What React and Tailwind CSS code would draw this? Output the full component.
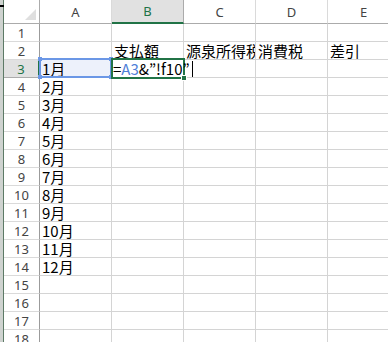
const cols = ['A', 'B', 'C', 'D', 'E']

const cellData = {
  2: { B: '支払額', C: '源泉所得税', D: '消費税', E: '差引' },
  3: { A: '1月' },
}
for (let m = 2; m <= 12; m++) cellData[m + 2] = { A: `${m}月` }

const jp = { fontFamily: '"Noto Sans CJK JP", sans-serif' }
const ui = { fontFamily: '"Noto Sans", sans-serif' }

export default function App() {
  const rows = Array.from({ length: 18 }, (_, i) => i + 1)

  return (
    <div className="relative w-[388px] h-[342px] overflow-hidden bg-white flex">
      {/* left window edge */}
      <div className="relative w-[4px] h-full bg-[#cfd3d0] border-r border-[#5d7a66] shrink-0">
        <div className="absolute left-0 top-[5px] w-[4px] h-[2px] bg-black" />
      </div>

      <div className="grid grid-cols-[36px_72px_72px_72px_72px_72px] grid-rows-[24px] auto-rows-[18px] content-start shrink-0">
        {/* header row */}
        <div className="flex items-end justify-end p-[3px] border-r border-b border-[#ababab] bg-white">
          <svg width="11" height="11" viewBox="0 0 11 11">
            <polygon points="11,0 11,11 0,11" fill="#dfdfdf" />
          </svg>
        </div>
        {cols.map(c => (
          <div
            key={c}
            className={`flex items-center justify-center text-[13px] leading-[16px] border-r ${c === 'B' ? 'bg-[#e1e1e1] text-[#217346] border-b-2 border-b-[#217346] border-r-[#ababab]' : 'bg-white text-[#444] border-b border-[#ababab] border-r-[#dadada]'}`}
            style={ui}
          >
            {c}
          </div>
        ))}

        {rows.map(r => (
          <Row key={r} r={r} />
        ))}
      </div>

      {/* reference range A3 (blue) */}
      <div className="absolute left-[39px] top-[58px] w-[73px] h-[20px] border-2 border-[#6b97e6] pointer-events-none">
        <div className="absolute -left-[3px] -top-[3px] w-[4px] h-[4px] bg-[#6b97e6]" />
        <div className="absolute -right-[3px] -top-[3px] w-[4px] h-[4px] bg-[#6b97e6]" />
        <div className="absolute -left-[3px] -bottom-[3px] w-[4px] h-[4px] bg-[#6b97e6]" />
        <div className="absolute -right-[3px] -bottom-[3px] w-[4px] h-[4px] bg-[#6b97e6]" />
      </div>

      {/* active cell B3 in edit mode */}
      <div className="absolute left-[111px] top-[58px] w-[74px] h-[21px] border-2 border-[#217346] pointer-events-none">
        <div className="absolute -right-[4px] -bottom-[4px] w-[6px] h-[6px] bg-[#217346] border border-white" />
      </div>
      <div
        className="absolute left-[113px] top-[60px] h-[17px] flex items-center whitespace-nowrap text-[15px] leading-[17px] text-black"
        style={jp}
      >
        <span>=</span>
        <span className="text-[#4f7fd8]">A3</span>
        <span>&amp;”!f10”</span>
        <span className="ml-[2px] w-[1px] h-[16px] bg-black" />
      </div>
    </div>
  )
}

function Row({ r }) {
  const data = cellData[r] || {}
  const active = r === 3
  return (
    <>
      <div
        className={`flex items-center justify-center text-[13px] leading-[16px] border-b ${active ? 'bg-[#e1e1e1] text-[#217346] border-r-2 border-r-[#217346] border-b-[#ababab]' : 'bg-white text-[#444] border-r border-r-[#9b9b9b] border-b-[#dadada]'}`}
        style={ui}
      >
        {r}
      </div>
      {cols.map(c => (
        <div
          key={c}
          className={`flex items-center pl-[2px] overflow-hidden whitespace-nowrap text-[15px] leading-[17px] text-black border-r border-b border-[#d4d4d4] ${active && c === 'A' ? 'bg-[#edf1fb]' : 'bg-white'}`}
          style={jp}
        >
          {data[c]}
        </div>
      ))}
    </>
  )
}
